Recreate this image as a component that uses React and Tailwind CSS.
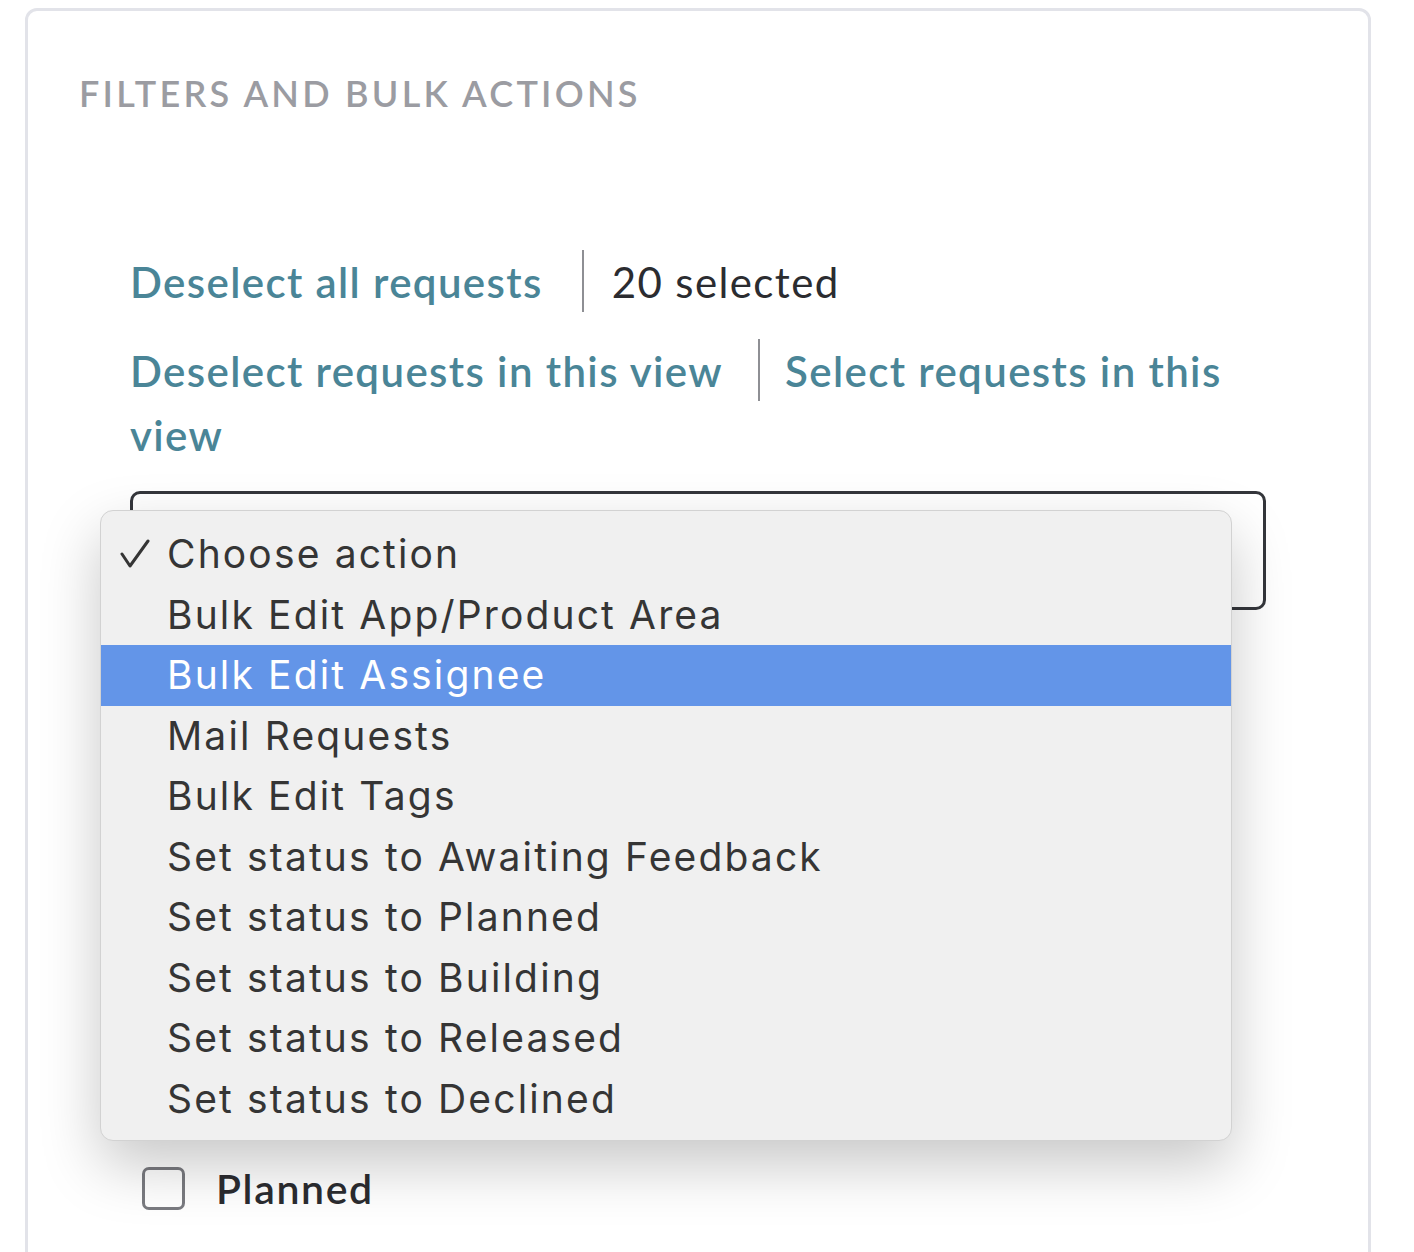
export default function App() {
  const items = [
    "Bulk Edit App/Product Area",
    "Bulk Edit Assignee",
    "Mail Requests",
    "Bulk Edit Tags",
    "Set status to Awaiting Feedback",
    "Set status to Planned",
    "Set status to Building",
    "Set status to Released",
    "Set status to Declined",
  ];
  return (
    <div className="h-[1252px] overflow-hidden bg-white pt-[8px] pl-[25px]" style={{ fontFamily: "Lato, 'Open Sans', sans-serif" }}>
      <div className="relative w-[1346px] h-[1320px] rounded-[12px] border-[3px] border-[#e2e3e9]">
        <div className="pl-[51px] pt-[60px]">
          <h2 className="text-[36px] leading-[44px] font-semibold tracking-[0.09em] text-[#9b9ca2] uppercase">Filters and bulk actions</h2>
        </div>
        <div className="ml-[102px] w-[1136px] mt-[135px]">
          <div className="text-[42px] leading-[64px] font-semibold tracking-[0.033em]">
            <span className="text-[#4a8597]">Deselect all requests</span>
            <span className="inline-block align-middle w-[2px] h-[62px] -mt-[18px] -mb-[6px] bg-[#8e8f94] ml-[39px] mr-[28px]"></span>
            <span className="text-[#2b2c30] font-normal">20 selected</span>
          </div>
          <div className="text-[42px] leading-[64px] font-semibold tracking-[0.033em] mt-[25px] text-[#4a8597]">
            <span>Deselect requests in this view</span>
            <span className="inline-block align-middle w-[2px] h-[62px] -mt-[18px] -mb-[6px] bg-[#8e8f94] ml-[35px] mr-[25px]"></span>
            <span>Select requests in this view</span>
          </div>
          <div className="mt-[24px] h-[119px] rounded-[10px] border-[3px] border-[#34363b]"></div>
          <div className="mt-[548px] ml-[12px] flex items-center gap-[31px]">
            <div className="w-[43px] h-[43px] rounded-[7px] border-[3px] border-[#7a7b80] bg-white"></div>
            <span className="text-[41px] font-semibold tracking-[0.04em] text-[#2b2c30]">Planned</span>
          </div>
        </div>
        <div
          className="absolute left-[72px] top-[499px] w-[1132px] h-[631px] rounded-[13px] border border-[#d2d2d2] bg-[#f0f0f0] py-[13px] shadow-[0_24px_60px_rgba(0,0,0,0.22)]"
          style={{ fontFamily: "Inter, 'Noto Sans', sans-serif" }}
        >
          <div className="h-[60.5px] flex items-center text-[39px] tracking-[0.055em] text-[#353535]">
            <span className="w-[66px] pl-[19px] flex items-center">
              <svg width="30" height="30" viewBox="0 0 30 30" fill="none" stroke="#353535" strokeWidth="3" strokeLinecap="round" strokeLinejoin="round">
                <polyline points="2,15 10,27 28,2" />
              </svg>
            </span>
            <span>Choose action</span>
          </div>
          {items.map((t) => (
            <div
              key={t}
              className={
                t === "Bulk Edit Assignee"
                  ? "h-[60.5px] flex items-center pl-[66px] text-[39px] tracking-[0.055em] bg-[#6395e8] text-white"
                  : "h-[60.5px] flex items-center pl-[66px] text-[39px] tracking-[0.055em] text-[#353535]"
              }
            >
              {t}
            </div>
          ))}
        </div>
      </div>
    </div>
  );
}
